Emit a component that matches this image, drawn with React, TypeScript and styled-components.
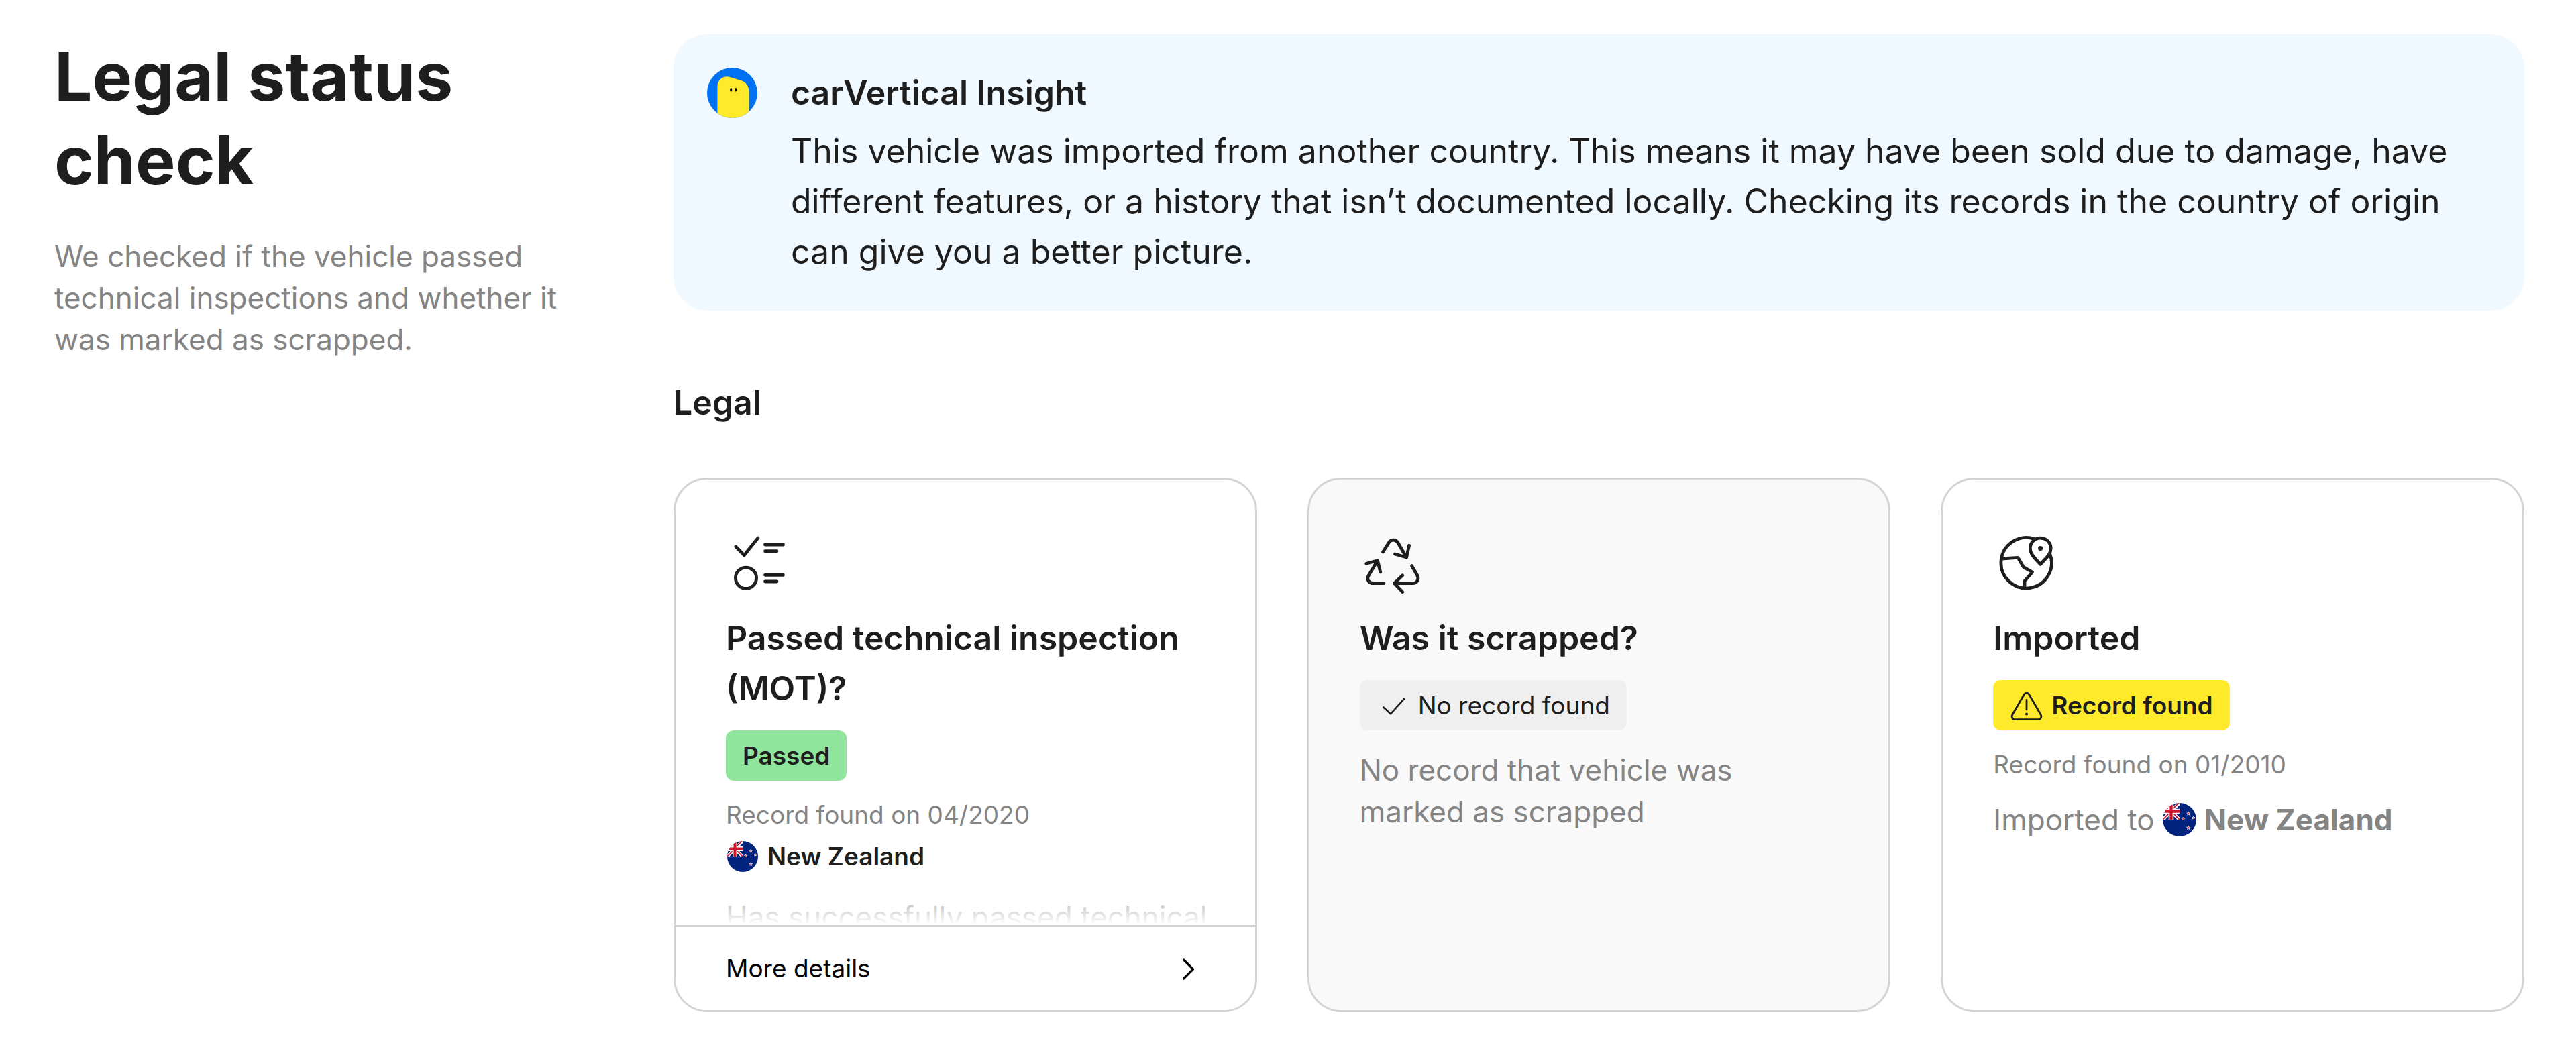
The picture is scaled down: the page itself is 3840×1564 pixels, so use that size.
import React from "react";
import styled, { createGlobalStyle } from "styled-components";

const ink = "#1e1e1e";
const muted = "#848484";
const line = "#d4d4d4";

const GlobalStyle = createGlobalStyle`
  *, *::before, *::after { box-sizing: border-box; }
  body {
    margin: 0;
    background: #ffffff;
    color: ${ink};
    font-family: Inter, "Liberation Sans", sans-serif;
  }
  h1, h2, h3, p { margin: 0; }
`;

const Page = styled.div`
  display: grid;
  grid-template-columns: 773px minmax(0, 1fr);
  column-gap: 150px;
  padding: 51px 77px 55px 81px;
`;

const Sidebar = styled.header`
  display: flex;
  flex-direction: column;
  gap: 50px;
`;

const PageTitle = styled.h1`
  font-size: 100px;
  line-height: 125px;
  font-weight: 700;
`;

const BodyText = styled.p`
  font-size: 44px;
  line-height: 62px;
  color: ${muted};
`;

const Main = styled.main`
  display: flex;
  flex-direction: column;
`;

const Insight = styled.section`
  display: flex;
  align-items: flex-start;
  gap: 50px;
  padding: 50px;
  border-radius: 50px;
  background: #f0f9ff;
`;

const InsightContent = styled.div`
  display: flex;
  flex-direction: column;
  gap: 12px;
  flex: 1;
  min-width: 0;
`;

const Heading = styled.h2`
  font-size: 50px;
  line-height: 75px;
  font-weight: 600;
`;

const InsightText = styled.p`
  font-size: 50px;
  line-height: 75px;
`;

const SectionHeading = styled(Heading)`
  margin: 100px 0 74px;
`;

const Cards = styled.div`
  display: grid;
  grid-template-columns: repeat(3, minmax(0, 1fr));
  gap: 75px;
`;

const Card = styled.article<{ $quiet?: boolean }>`
  display: flex;
  flex-direction: column;
  border: 3px solid ${line};
  border-radius: 50px;
  overflow: hidden;
  background: ${(p) => (p.$quiet ? "#f9f9f9" : "#ffffff")};
`;

const CardBody = styled.div<{ $clipped?: boolean }>`
  position: relative;
  display: flex;
  flex-direction: column;
  align-items: flex-start;
  padding: 75px 70px 0 75px;
  ${(p) =>
    p.$clipped &&
    `
    max-height: 664px;
    overflow: hidden;
    &::after {
      content: "";
      position: absolute;
      inset: auto 0 0 0;
      height: 70px;
      background: linear-gradient(rgba(255, 255, 255, 0), #ffffff);
    }
  `}

  & > * {
    flex: none;
    max-width: 100%;
  }
`;

const CardTitle = styled(Heading).attrs({ as: "h3" })`
  margin: 24px 0 25px;
`;

const Badge = styled.span<{ $tone: "good" | "none" | "warn" }>`
  display: inline-flex;
  align-items: center;
  gap: 12px;
  height: 75px;
  padding: 0 25px;
  border-radius: 12px;
  font-size: 37px;
  line-height: 62px;
  font-weight: ${(p) => (p.$tone === "none" ? 400 : 600)};
  background: ${(p) => ({ good: "#8ee59b", none: "#efefef", warn: "#ffe92b" })[p.$tone]};
`;

const RecordDate = styled.p`
  margin-top: 20px;
  font-size: 37px;
  line-height: 62px;
  color: ${muted};
`;

const Country = styled.p`
  display: flex;
  align-items: center;
  gap: 14px;
  padding-left: 2px;
  font-size: 37px;
  line-height: 62px;
  font-weight: 600;
`;

const Description = styled(BodyText)<{ $gap: number }>`
  margin-top: ${(p) => p.$gap}px;
`;

const ImportLine = styled(Description)`
  display: flex;
  align-items: center;
  gap: 12px;
`;

const MoreButton = styled.button`
  display: flex;
  align-items: center;
  justify-content: space-between;
  height: 127px;
  padding: 0 75px;
  border: 0;
  border-top: 3px solid ${line};
  background: #ffffff;
  color: #000000;
  font-family: inherit;
  font-size: 37px;
  line-height: 62px;
  cursor: pointer;
`;

const Svg = styled.svg<{ $size: number }>`
  display: block;
  flex: none;
  width: ${(p) => p.$size}px;
  height: ${(p) => p.$size}px;
`;

const stroke = {
  fill: "none",
  stroke: ink,
  strokeLinecap: "round",
  strokeLinejoin: "round",
} as const;

const Avatar = () => (
  <Svg $size={75} viewBox="0 0 75 75" aria-hidden="true">
    <clipPath id="avatar-clip">
      <circle cx="37.5" cy="37.5" r="37.5" />
    </clipPath>
    <g clipPath="url(#avatar-clip)">
      <rect width="75" height="75" fill="#0071f2" />
      <path d="M15.4 75V28.5C15.4 19 22 13.3 30 13.3C36 14.5 44 17 50.5 19C58 21.5 62.6 27.5 62.6 36V75Z" fill="#ffe92b" />
      <ellipse cx="35.7" cy="32.8" rx="1.6" ry="2.7" />
      <ellipse cx="42.7" cy="32.8" rx="1.6" ry="2.7" />
    </g>
  </Svg>
);

const ChecklistIcon = () => (
  <Svg $size={100} viewBox="0 0 100 100" aria-hidden="true">
    <g {...stroke} strokeWidth="4.8">
      <path d="M14.8 25L27.3 37.8L48 12" />
      <path d="M58.5 22H85.5M58.5 31.7H76M58.5 67.3H85.5M58.5 77H76" />
      <circle cx="30" cy="71.8" r="15.6" />
    </g>
  </Svg>
);

const RecycleIcon = () => (
  <Svg $size={100} viewBox="0 0 100 100" aria-hidden="true">
    <g {...stroke} strokeWidth="4.8">
      <path d="M34.5 33L43 19.4C46 14 53.5 13.6 56.8 19L69.6 41" />
      <path d="M52.5 36L69.6 41L73.6 23.3" />
      <path d="M36 79.7H20.5C13.5 79.7 9.8 74 13.2 68L26.5 45.8" />
      <path d="M9.8 50.3L26.5 45.8L30.8 62.8" />
      <path d="M77.5 53.5L85.6 67.5C88.8 73.5 85.5 79.7 79 79.7H51.5" />
      <path d="M63.8 67.8L51.5 79.7L63.8 92.6" />
    </g>
  </Svg>
);

const GlobePinIcon = () => (
  <Svg $size={100} viewBox="0 0 100 100" aria-hidden="true">
    <g {...stroke} strokeWidth="4.8">
      <path d="M62 13.7A37.7 37.7 0 1 0 84.6 35.3" />
      <path d="M70.6 51.5C64 43.5 55.3 37 55.3 27.6A15.4 15.4 0 0 1 86.2 27.6C86.2 37 77.3 43.5 70.6 51.5Z" />
      <path d="M12.6 43L37 41.3L45.6 55.7L58.6 63L47 76.3V87" />
    </g>
    <circle cx="70.6" cy="27.6" r="3.5" fill={ink} />
  </Svg>
);

const CheckIcon = () => (
  <Svg $size={50} viewBox="0 0 50 50" aria-hidden="true">
    <path {...stroke} strokeWidth="2.6" d="M10.3 27.5L21 37.4L41.5 14.5" />
  </Svg>
);

const WarningIcon = () => (
  <Svg $size={50} viewBox="0 0 50 50" aria-hidden="true">
    <path
      {...stroke}
      strokeWidth="2.8"
      d="M21.4 8.2C23 5.3 27 5.3 28.6 8.2L46.3 38.8C48 41.8 46 45.6 42.5 45.6H7.5C4 45.6 2 41.8 3.7 38.8Z"
    />
    <path {...stroke} strokeWidth="2.8" d="M25 16.5V31" />
    <circle cx="25" cy="37.6" r="2" fill={ink} />
  </Svg>
);

const ChevronIcon = () => (
  <Svg $size={50} viewBox="0 0 50 50" aria-hidden="true">
    <path {...stroke} stroke="#000000" strokeWidth="3.2" d="M18.5 12L32.5 26L18.5 40" />
  </Svg>
);

const starPath = (cx: number, cy: number, r: number) =>
  Array.from({ length: 10 }, (_, i) => {
    const radius = i % 2 ? r * 0.42 : r;
    const angle = (Math.PI / 5) * i - Math.PI / 2;
    return `${i ? "L" : "M"}${cx + radius * Math.cos(angle)} ${cy + radius * Math.sin(angle)}`;
  }).join("") + "Z";

const Flag = ({ size, id }: { size: number; id: string }) => (
  <Svg $size={size} viewBox="0 0 50 50" aria-hidden="true">
    <clipPath id={`${id}-disc`}>
      <circle cx="25" cy="25" r="25" />
    </clipPath>
    <clipPath id={`${id}-canton`}>
      <rect width="25" height="25" />
    </clipPath>
    <g clipPath={`url(#${id}-disc)`}>
      <rect width="50" height="50" fill="#00247d" />
      <g clipPath={`url(#${id}-canton)`} fill="none">
        <path d="M0 0L25 25M25 0L0 25" stroke="#ffffff" strokeWidth="5" />
        <path d="M-1 0.6L12.5 14.1M12.5 12.5L26 26M26 -2.2L12.5 11.3M12.5 12.5L-1 26" stroke="#cf142b" strokeWidth="1.8" />
        <path d="M12.5 0V25M0 12.5H25" stroke="#ffffff" strokeWidth="7.6" />
        <path d="M12.5 0V25M0 12.5H25" stroke="#cf142b" strokeWidth="4.4" />
      </g>
      <g fill="#cf142b" stroke="#ffffff" strokeWidth="0.8">
        <path d={starPath(38.3, 16, 2.6)} />
        <path d={starPath(30.2, 24, 2.6)} />
        <path d={starPath(45.6, 22.2, 2.2)} />
        <path d={starPath(38.3, 37.2, 2.9)} />
      </g>
    </g>
  </Svg>
);

export default function App() {
  return (
    <>
      <GlobalStyle />
      <Page>
        <Sidebar>
          <PageTitle>Legal status check</PageTitle>
          <BodyText>
            We checked if the vehicle passed technical inspections and whether it was marked as scrapped.
          </BodyText>
        </Sidebar>
        <Main>
          <Insight>
            <Avatar />
            <InsightContent>
              <Heading>carVertical Insight</Heading>
              <InsightText>
                This vehicle was imported from another country. This means it may have been sold due to damage, have
                different features, or a history that isn’t documented locally. Checking its records in the country of
                origin can give you a better picture.
              </InsightText>
            </InsightContent>
          </Insight>

          <SectionHeading>Legal</SectionHeading>

          <Cards>
            <Card>
              <CardBody $clipped>
                <ChecklistIcon />
                <CardTitle>Passed technical inspection (MOT)?</CardTitle>
                <Badge $tone="good">Passed</Badge>
                <RecordDate>Record found on 04/2020</RecordDate>
                <Country>
                  <Flag size={46} id="inspection-flag" />
                  New Zealand
                </Country>
                <Description $gap={28}>Has successfully passed technical</Description>
              </CardBody>
              <MoreButton type="button">
                More details
                <ChevronIcon />
              </MoreButton>
            </Card>

            <Card $quiet>
              <CardBody>
                <RecycleIcon />
                <CardTitle>Was it scrapped?</CardTitle>
                <Badge $tone="none">
                  <CheckIcon />
                  No record found
                </Badge>
                <Description $gap={28}>No record that vehicle was marked as scrapped</Description>
              </CardBody>
            </Card>

            <Card>
              <CardBody>
                <GlobePinIcon />
                <CardTitle>Imported</CardTitle>
                <Badge $tone="warn">
                  <WarningIcon />
                  Record found
                </Badge>
                <RecordDate>Record found on 01/2010</RecordDate>
                <ImportLine $gap={20}>
                  Imported to
                  <Flag size={50} id="import-flag" />
                  <strong>New Zealand</strong>
                </ImportLine>
              </CardBody>
            </Card>
          </Cards>
        </Main>
      </Page>
    </>
  );
}
